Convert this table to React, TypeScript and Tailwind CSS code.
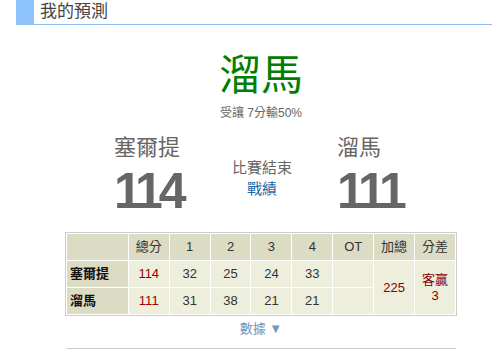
import React from 'react';

const font = { fontFamily: '"Liberation Sans", "Noto Sans CJK TC", sans-serif' };

const quarters = ['1', '2', '3', '4'];

const rows = [
    { team: '塞爾提', total: '114', q: ['32', '25', '24', '33'] },
    { team: '溜馬', total: '111', q: ['31', '38', '21', '21'] },
];

const App = () => {
    return (
        <div className="w-[492px] h-[358px] bg-white overflow-hidden" style={font}>
            {/* header */}
            <div className="flex h-[25px]">
                <div className="w-[16px]" />
                <div className="w-[18px] h-[25px] bg-[#8ec2fa]" />
                <div className="flex-1 border-b border-[#8fbff0] pl-[6px]">
                    <span className="text-[17px] leading-[24px] text-[#444]">我的預測</span>
                </div>
            </div>

            {/* pick */}
            <div className="ml-[65px] w-[392px]">
                <div className="mt-[26px] text-center text-[42px] leading-[50px] text-[#008000]">溜馬</div>
                <div className="mt-[5px] text-center text-[12px] leading-[14px] text-[#666]">受讓 7分輸50%</div>

                <div className="mt-[15px] flex">
                    <div className="w-[137px] pl-[49px] flex flex-col items-start">
                        <div className="text-[22px] leading-[26px] text-[#666]">塞爾提</div>
                        <div className="mt-[4px] text-[50px] leading-[52px] font-bold text-[#666] tracking-[-4px]">114</div>
                    </div>
                    <div className="w-[120px] flex flex-col items-center pt-[22px]">
                        <div className="text-[15px] leading-[22px] text-[#666] whitespace-nowrap">比賽結束</div>
                        <div className="text-[15px] leading-[20px] text-[#1a6aa8]">戰績</div>
                    </div>
                    <div className="flex-1 pl-[15px] flex flex-col items-start">
                        <div className="text-[22px] leading-[26px] text-[#666]">溜馬</div>
                        <div className="mt-[4px] text-[50px] leading-[52px] font-bold text-[#666] tracking-[-4px]">111</div>
                    </div>
                </div>

                {/* box score */}
                <table className="mt-[15px] border border-[#cccccc] border-separate border-spacing-[1px] text-[13px] text-[#333] text-center">
                    <thead>
                        <tr className="h-[26px]">
                            <th className="w-[61px] bg-[#dcdbc4] font-normal" />
                            <th className="w-[40px] bg-[#dcdbc4] font-normal">總分</th>
                            {quarters.map((q) => (
                                <th key={q} className="w-[40px] bg-[#dcdbc4] font-normal">{q}</th>
                            ))}
                            <th className="w-[40px] bg-[#dcdbc4] font-normal">OT</th>
                            <th className="w-[40px] bg-[#dcdbc4] font-normal">加總</th>
                            <th className="w-[40px] bg-[#dcdbc4] font-normal">分差</th>
                        </tr>
                    </thead>
                    <tbody>
                        {rows.map((r, i) => (
                            <tr key={r.team} className="h-[26px]">
                                <td className="bg-[#dcdbc4] text-left pl-[3px] font-bold text-[#111]">{r.team}</td>
                                <td className="bg-[#eeeedd] text-[#990000]">{r.total}</td>
                                {r.q.map((v, j) => (
                                    <td key={j} className="bg-[#eeeedd]">{v}</td>
                                ))}
                                <td className="bg-[#eeeedd]" />
                                {i === 0 && (
                                    <>
                                        <td rowSpan={2} className="bg-[#eeeedd] text-[#880000]">225</td>
                                        <td rowSpan={2} className="bg-[#eeeedd] text-[#880000] leading-[16px]">
                                            客贏<br />3
                                        </td>
                                    </>
                                )}
                            </tr>
                        ))}
                    </tbody>
                </table>

                <div className="mt-[4px] text-center text-[13px] leading-[18px] text-[#7196c2]">數據 ▼</div>
                <div className="mt-[10px] mx-[1px] border-t border-[#cccccc]" />
            </div>
        </div>
    );
};

export default App;
